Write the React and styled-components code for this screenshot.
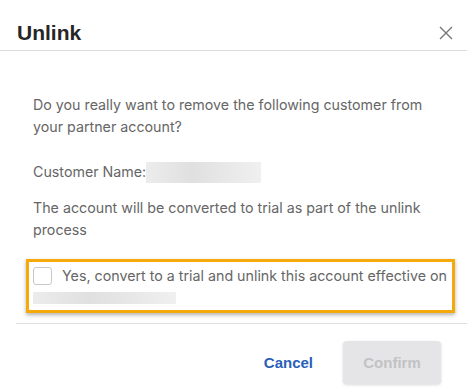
import React, { useState } from 'react';
import styled, { createGlobalStyle } from 'styled-components';

const Global = createGlobalStyle`
  html, body {
    margin: 0;
    padding: 0;
    background: #fff;
  }
  body {
    font-family: Inter, "Noto Sans", sans-serif;
    -webkit-font-smoothing: antialiased;
  }
`;

const Dialog = styled.div`
  width: 467px;
  height: 392px;
  background: #fff;
  display: flex;
  flex-direction: column;
  overflow: hidden;
`;

const Header = styled.div`
  height: 51px;
  flex-shrink: 0;
  display: flex;
  align-items: center;
  justify-content: space-between;
  padding: 0 10px 0 17px;
  border-bottom: 1px solid #dcdcdc;
  box-sizing: border-box;
`;

const Title = styled.h2`
  margin: 0;
  padding-top: 15px;
  font-family: "Liberation Sans", Arial, sans-serif;
  font-weight: 700;
  font-size: 21px;
  color: #262626;
`;

const CloseButton = styled.button`
  border: none;
  background: none;
  padding: 4px;
  margin-top: 15px;
  display: flex;
  cursor: pointer;
  color: #777;
`;

const Body = styled.div`
  padding: 43px 40px 0 33px;
  color: #666;
  font-size: 14.25px;
  line-height: 22px;
`;

const Paragraph = styled.p`
  margin: 0 0 ${p => p.$gap || 0}px;
`;

const NameRow = styled.div`
  display: flex;
  align-items: center;
  margin-bottom: 14px;
`;

const Redacted = styled.span`
  display: ${p => (p.$block ? 'block' : 'inline-block')};
  width: ${p => p.$w}px;
  height: ${p => p.$h}px;
  margin-top: ${p => p.$top || 0}px;
  background: linear-gradient(90deg, #ececec 0%, #e0e0e0 40%, #e8e8e8 70%, #f0f0f0 100%);
  filter: blur(0.6px);
`;

const Highlight = styled.label`
  display: block;
  margin: 0 12px 0 26px;
  border: 3px solid #f5a90a;
  box-shadow: 0 2px 4px rgba(0, 0, 0, 0.3);
  padding: 3px 0 6px 4px;
  color: #666;
  font-size: 14.25px;
  line-height: 22px;
  cursor: pointer;
`;

const CheckRow = styled.div`
  display: flex;
  align-items: center;
  gap: 10px;
  white-space: nowrap;
`;

const Box = styled.span`
  width: 19px;
  height: 18px;
  box-sizing: border-box;
  border: 1px solid #c8c8c8;
  border-radius: 3px;
  background: ${p => (p.$on ? '#2a63c4' : '#fff')};
  flex-shrink: 0;
`;

const HiddenInput = styled.input`
  display: none;
`;

const Footer = styled.div`
  margin: 10px 0 0 16px;
  border-top: 1px solid #e0e0e0;
  display: flex;
  justify-content: flex-end;
  align-items: center;
  gap: 30px;
  padding: 17px 26px 0 0;
`;

const LinkButton = styled.button`
  border: none;
  background: none;
  padding: 0;
  font-family: "Liberation Sans", Arial, sans-serif;
  font-weight: 700;
  font-size: 15px;
  color: #2a5fb9;
  cursor: pointer;
`;

const PrimaryButton = styled.button`
  width: 98px;
  height: 43px;
  border: none;
  border-radius: 4px;
  background: #e5e5e7;
  color: #c2c2c4;
  font-family: "Liberation Sans", Arial, sans-serif;
  font-weight: 700;
  font-size: 15px;
  box-shadow: 0 1px 3px rgba(0, 0, 0, 0.15);
`;

const CloseIcon = () => (
  <svg width="14" height="14" viewBox="0 0 14 14" fill="none" stroke="currentColor" strokeWidth="1.4">
    <path d="M1 1 L13 13 M13 1 L1 13" />
  </svg>
);

export default function App() {
  const [checked, setChecked] = useState(false);
  return (
    <>
      <Global />
      <Dialog>
        <Header>
          <Title>Unlink</Title>
          <CloseButton aria-label="Close">
            <CloseIcon />
          </CloseButton>
        </Header>
        <Body>
          <Paragraph $gap={23}>
            Do you really want to remove the following customer from your partner account?
          </Paragraph>
          <NameRow>
            Customer Name:
            <Redacted $w={115} $h={21} />
          </NameRow>
          <Paragraph $gap={18}>
            The account will be converted to trial as part of the unlink process
          </Paragraph>
        </Body>
        <Highlight>
          <HiddenInput type="checkbox" checked={checked} onChange={e => setChecked(e.target.checked)} />
          <CheckRow>
            <Box $on={checked} />
            Yes, convert to a trial and unlink this account effective on
          </CheckRow>
          <Redacted $block $w={143} $h={12} $top={5} />
        </Highlight>
        <Footer>
          <LinkButton>Cancel</LinkButton>
          <PrimaryButton disabled>Confirm</PrimaryButton>
        </Footer>
      </Dialog>
    </>
  );
}
